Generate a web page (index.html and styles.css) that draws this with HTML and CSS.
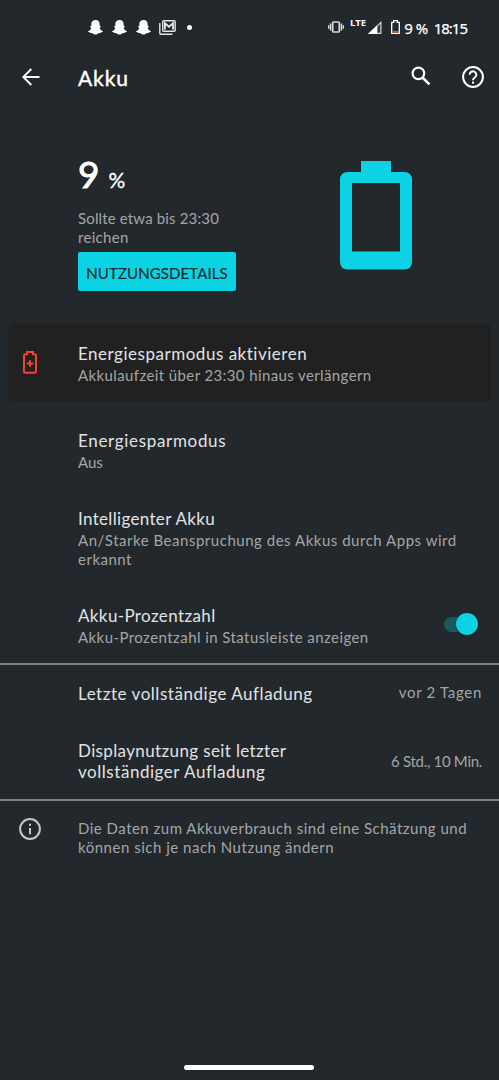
FILE: index.html
```html
<!DOCTYPE html>
<html lang="de">
<head>
<meta charset="utf-8">
<title>Akku</title>
<link rel="stylesheet" href="styles.css">
</head>
<body>
<div class="screen">
  <div class="status">
    <div class="notifications">
      <svg class="ghost" viewBox="0 0 15 15"><path d="M7.500 0C10.200 0 11.700 1.900 11.700 4.200V6.200C12.400 5.900 13.200 6.500 12.600 7L11.700 7.700C12.200 9.600 13.300 10.700 15 11.200C14.800 12 13.900 12.200 12.900 12.400L12.500 13.200C11 12.800 10.400 13.300 9.500 13.900C8.200 14.700 6.800 14.700 5.500 13.900C4.600 13.300 4 12.800 2.500 13.200L2.100 12.400C1.100 12.200 .2 12 0 11.200C1.700 10.700 2.800 9.600 3.300 7.700L2.400 7C1.800 6.500 2.600 5.900 3.300 6.200V4.200C3.300 1.900 4.800 0 7.500 0Z"/></svg>
      <svg class="ghost" viewBox="0 0 15 15"><path d="M7.500 0C10.200 0 11.700 1.900 11.700 4.200V6.200C12.400 5.900 13.200 6.500 12.600 7L11.700 7.700C12.200 9.600 13.300 10.700 15 11.200C14.800 12 13.900 12.200 12.900 12.400L12.500 13.200C11 12.800 10.400 13.300 9.500 13.900C8.200 14.700 6.800 14.700 5.500 13.900C4.600 13.300 4 12.800 2.500 13.200L2.100 12.400C1.100 12.200 .2 12 0 11.200C1.700 10.700 2.800 9.600 3.300 7.700L2.400 7C1.800 6.500 2.600 5.900 3.300 6.200V4.200C3.300 1.900 4.800 0 7.500 0Z"/></svg>
      <svg class="ghost" viewBox="0 0 15 15"><path d="M7.500 0C10.200 0 11.700 1.900 11.700 4.200V6.200C12.400 5.900 13.200 6.500 12.600 7L11.700 7.700C12.200 9.600 13.300 10.700 15 11.200C14.800 12 13.900 12.200 12.900 12.400L12.500 13.200C11 12.800 10.400 13.300 9.500 13.900C8.200 14.700 6.800 14.700 5.500 13.900C4.600 13.300 4 12.800 2.500 13.200L2.100 12.400C1.100 12.200 .2 12 0 11.200C1.700 10.700 2.800 9.600 3.300 7.700L2.400 7C1.800 6.500 2.600 5.900 3.300 6.200V4.200C3.300 1.900 4.800 0 7.500 0Z"/></svg>
      <svg class="mail" viewBox="0 0 17 15"><g fill="none" stroke="#e4e5e6"><path d="M.8 3V13.200Q.8 14.200 1.800 14.200H13.500" stroke-width="1.400"/><rect x="3.700" y=".8" width="12.500" height="10.400" rx="1" stroke-width="1.400"/><path d="M5.900 9.500V3.300L10 6.700L14 3.300V9.500" stroke-width="1.900"/></g></svg>
      <i class="dot"></i>
    </div>
    <div class="system">
      <svg class="vibrate" viewBox="0 0 16 12"><g fill="none" stroke="#d4d6d7"><rect x="4.700" y="1" width="6.600" height="10" rx=".8" stroke-width="1.700"/><path d="M2.600 2.400V9.600M13.400 2.400V9.600" stroke-width="1.600"/><path d="M.7 4.200V7.800M15.300 4.200V7.800" stroke-width="1.400"/></g></svg>
      <span class="lte">LTE</span>
      <svg class="signal" viewBox="0 0 14 13"><path d="M0 13L13.500 0V13Z" fill="#d4d6d7"/><path d="M9.200 5.800L12.300 2.800V11.800H9.200Z" fill="#343a3e"/><path d="M0 13L9.200 4.200V13Z" fill="#fff"/></svg>
      <svg class="cell" viewBox="0 0 9 14"><path d="M.7 2.300H2.700V.7H6.300V2.300H8.300V13.300H.7Z" fill="none" stroke="#fff" stroke-width="1.300"/><path d="M1.400 10.900H7.600V12.700H1.400Z" fill="#d9583f"/></svg>
      <span class="percent">9 %</span><span class="clock">18:15</span>
    </div>
  </div>

  <header class="bar">
    <svg class="back" viewBox="0 0 18 18"><path d="M17.500 9H1.500M9.300 1L1.300 9L9.300 17" fill="none" stroke="#fff" stroke-width="1.900"/></svg>
    <h1>Akku</h1>
    <svg class="search" viewBox="0 0 20 20"><circle cx="7.400" cy="7.400" r="5.800" fill="none" stroke="#fff" stroke-width="2.200"/><path d="M11.600 11.600L18.400 18.400" stroke="#fff" stroke-width="2.700"/></svg>
    <svg class="help" viewBox="0 0 22 22"><g fill="none" stroke="#fff" stroke-width="2"><circle cx="11" cy="11" r="9.900"/><path d="M7.700 8.700A3.300 3.300 0 1 1 13.300 11C12.100 12 11 12.500 11 14.200"/></g><rect x="10" y="15.600" width="2" height="2" fill="#fff"/></svg>
  </header>

  <section class="hero">
    <div class="summary">
      <div class="level"><span class="level-number">9</span><span class="level-unit">%</span></div>
      <p class="sub"><span class="t-remain">Sollte etwa bis 23:30</span><br><span class="t-reach">reichen</span></p>
      <button class="details"><span>NUTZUNGSDETAILS</span></button>
    </div>
    <svg class="battery" viewBox="0 0 72 109"><path fill="#0bd3e4" fill-rule="evenodd" d="M21 0H51V11H64Q72 11 72 19V100.500Q72 108.500 64 108.500H8Q0 108.500 0 100.500V19Q0 11 8 11H21ZM12 22V90.500H60V22Z"/></svg>
  </section>

  <section class="tip">
    <svg class="saver" viewBox="0 0 14 23"><path d="M2.200 3.200H4V1H10V3.200H11.800Q13 3.200 13 4.400V20.600Q13 21.800 11.800 21.800H2.200Q1 21.800 1 20.600V4.400Q1 3.200 2.200 3.200ZM7 9.200V15.800M3.700 12.500H10.300" fill="none" stroke="#f44336" stroke-width="2"/></svg>
    <div>
      <h2 class="t-activate">Energiesparmodus aktivieren</h2>
      <p class="sub t-extend">Akkulaufzeit über 23:30 hinaus verlängern</p>
    </div>
  </section>

  <section class="settings">
    <div class="row mode"><h2 class="t-mode">Energiesparmodus</h2><p class="sub t-off">Aus</p></div>
    <div class="row smart"><h2 class="t-smart">Intelligenter Akku</h2><p class="sub"><span class="t-demand">An/Starke Beanspruchung des Akkus durch Apps wird</span><br><span class="t-known">erkannt</span></p></div>
    <div class="row toggle">
      <div><h2 class="t-share">Akku-Prozentzahl</h2><p class="sub t-show">Akku-Prozentzahl in Statusleiste anzeigen</p></div>
      <div class="switch"><i class="track"></i><i class="knob"></i></div>
    </div>
  </section>

  <section class="stats">
    <div class="stat charge"><h2 class="t-charge">Letzte vollständige Aufladung</h2><span class="sub t-ago">vor 2 Tagen</span></div>
    <div class="stat display"><h2><span class="t-use">Displaynutzung seit letzter</span><br><span class="t-full">vollständiger Aufladung</span></h2><span class="sub t-time">6 Std., 10 Min.</span></div>
  </section>

  <footer class="note">
    <svg class="info" viewBox="0 0 22 22"><circle cx="11" cy="11" r="9.900" fill="none" stroke="#c5c7c9" stroke-width="2"/><path d="M10 5.700H12V7.700H10ZM10 10H12V16.200H10Z" fill="#c5c7c9"/></svg>
    <p class="sub"><span class="t-note1">Die Daten zum Akkuverbrauch sind eine Schätzung und</span><br><span class="t-note2">können sich je nach Nutzung ändern</span></p>
  </footer>
  <div class="home"></div>
</div>
</body>
</html>
```
FILE: styles.css
```css
* { box-sizing: border-box; }
body { margin: 0; background: #23282c; }
h1, h2, p { margin: 0; font-weight: 400; }
svg { display: block; flex: none; }
.screen { width: 499px; height: 1080px; display: flex; flex-direction: column; font-family: Lato, sans-serif; font-variant-ligatures: none; color: #e2e3e4; white-space: nowrap; }

.status { height: 54px; flex: none; display: flex; justify-content: space-between; padding: 0 32px 0 88px; color: #fff; }
.notifications, .system { display: flex; align-items: center; }
.notifications { gap: 9px; }
.ghost { width: 15px; height: 15px; fill: #fff; margin-top: 1px; }
.mail { width: 17px; height: 15px; margin-left: -1px; }
.dot { width: 5px; height: 5px; border-radius: 50%; background: #fff; margin-left: 2px; }
.vibrate { width: 16px; height: 12px; }
.lte { font: 700 9.500px/12px "Open Sans", sans-serif; margin: -8px 2px 0 6px; }
.signal { width: 14px; height: 13px; margin-top: 1px; }
.cell { width: 9px; height: 14px; margin: 0 4px 0 9px; }
.percent, .clock { font: 400 15px/20px "Noto Sans", sans-serif; -webkit-text-stroke: .25px #fff; margin-top: 2px; }
.percent { letter-spacing: -.5px; }
.clock { margin: 2px 0 0 6px; letter-spacing: -1px; }

.bar { height: 46px; flex: none; display: flex; align-items: center; padding: 0 15px 0 22px; }
.back { width: 18px; height: 18px; margin-right: 38px; }
.bar h1 { flex: 1; font-size: 21px; -webkit-text-stroke: .4px #fff; letter-spacing: .9px; line-height: 26px; color: #fff; margin-top: 2px; }
.search { width: 20px; height: 20px; margin: -2px 31px 0 0; }
.help { width: 22px; height: 22px; margin-top: -1px; }

.hero { height: 223px; flex: none; display: flex; justify-content: space-between; padding: 50px 87px 0 78px; }
.level { height: 59px; display: flex; align-items: baseline; color: #fff; line-height: 48px; }
.level-number { font-size: 37px; -webkit-text-stroke: .9px #fff; }
.level-unit { font-size: 21px; margin-left: 9px; -webkit-text-stroke: .3px #fff; }
.sub { font-size: 15px; line-height: 19px; color: #a3a6a8; }
.details { display: block; width: 158px; height: 39px; margin-top: 5px; padding: 3px 0 0; border: 0; border-radius: 2px; background: #0bd3e4; color: #142b31; font: 400 15px/20px Lato, sans-serif; letter-spacing: .1px; -webkit-text-stroke: .2px #142b31; }
.battery { width: 72px; height: 109px; margin-top: 11px; }

.tip { height: 79px; flex: none; margin: 0 8px; padding: 20px 0 0 14px; display: flex; border-radius: 7px; background: #212121; }
.saver { width: 16px; height: 23px; margin: 8px 40px 0 0; }
h2 { font-size: 17px; line-height: 21px; }
h2 + .sub { margin-top: 2px; }

.settings { height: 261px; flex: none; padding: 28px 21px 0 78px; }
.row { height: 78px; }
.smart { height: 97px; }
.toggle { display: flex; justify-content: space-between; }
.switch { width: 34px; height: 22px; margin-top: 8px; display: flex; align-items: center; }
.track { width: 30px; height: 15px; flex: none; border-radius: 8px; background: #1b5960; }
.knob { width: 22px; height: 22px; flex: none; margin-left: -18px; border-radius: 50%; background: #0bd3e4; box-shadow: 0 1px 2px #0006; }

.stats { height: 138px; flex: none; border: solid #7d8183; border-width: 2px 0; padding-top: 18px; margin-top: -.5px; }
.stat { display: flex; justify-content: space-between; align-items: center; padding: 0 17px 0 78px; }
.charge > .sub { margin-top: -1px; }
.display { margin-top: 36px; }
.note { display: flex; padding: 17px 0 0 19px; }
.note .sub { margin-top: 1px; }
.info { width: 22px; height: 22px; margin-right: 37px; }
.home { width: 130px; height: 5px; margin: auto auto 10px 184px; border-radius: 3px; background: #fff; }

/* Tracking per text line */
.t-remain { letter-spacing: .15px; }
.t-reach { letter-spacing: .3px; }
.t-activate { letter-spacing: .52px; }
.t-extend { letter-spacing: .39px; }
.t-mode { letter-spacing: .68px; }
.t-smart { letter-spacing: .33px; }
.t-demand { letter-spacing: .52px; }
.t-known { letter-spacing: .5px; }
.t-share { letter-spacing: .38px; }
.t-show { letter-spacing: .43px; }
.t-charge { letter-spacing: .54px; }
.t-use { letter-spacing: .37px; }
.t-full { letter-spacing: .54px; }
.stat > .t-ago { letter-spacing: .68px; }
.stat > .t-time { letter-spacing: -.3px; }
.t-note1 { letter-spacing: .49px; }
.t-note2 { letter-spacing: .51px; }
```
